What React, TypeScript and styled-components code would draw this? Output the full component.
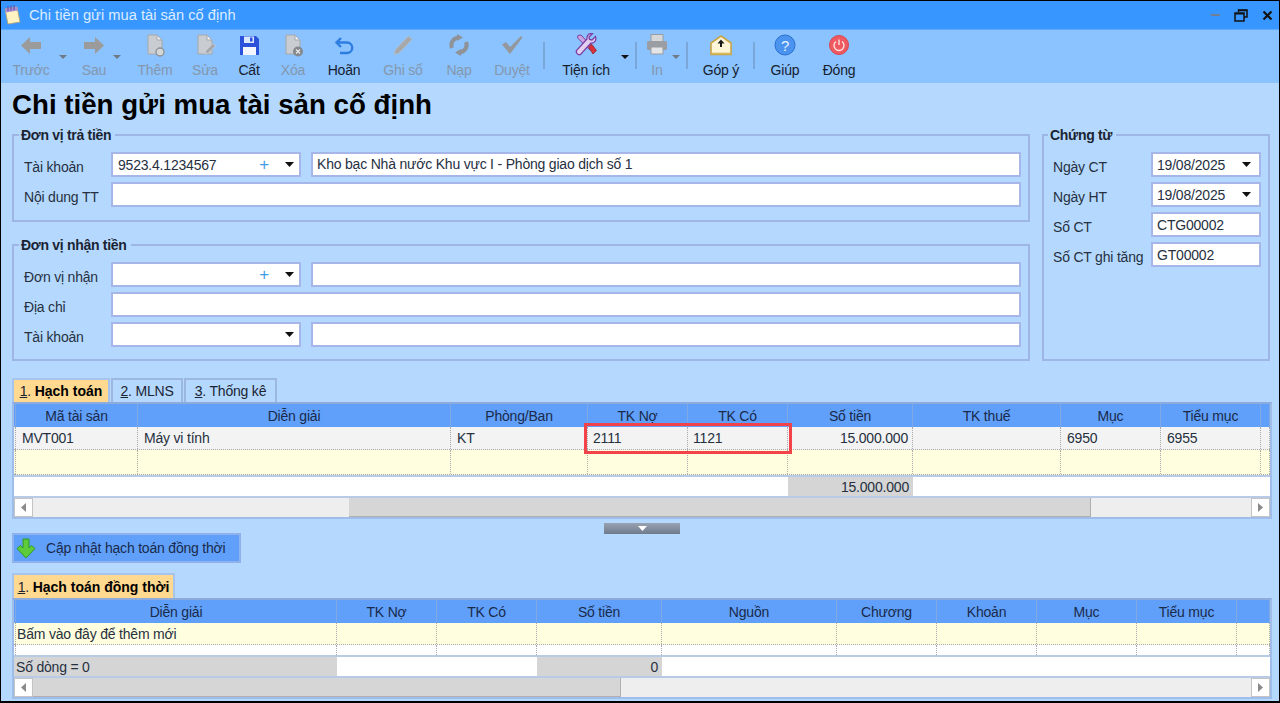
import React from "react";
import styled, { createGlobalStyle } from "styled-components";

const UI_FONT = `"Liberation Sans", Arial, sans-serif`;

const GlobalStyle = createGlobalStyle`
  html, body {
    margin: 0;
    padding: 0;
    overflow: hidden;
    background: #b5d9fe;
  }
  * {
    box-sizing: border-box;
  }
`;

const ICONS: Record<string, React.ReactNode> = {
  back: <path d="M2 12.500 11 4v5h11v7H11v5z" fill="#9b9b9b" />,
  next: <path d="M22 12.500 13 4v5H2v7h11v5z" fill="#9b9b9b" />,
  add: (
    <>
      <path d="M5 2h9l5 5v14H5z" fill="#c9cdd2" stroke="#a4a8ac" />
      <path d="M14 2v5h5z" fill="#eef0f2" stroke="#a4a8ac" />
      <circle cx="17" cy="19" r="4" fill="#d3d7da" stroke="#8f9296" strokeWidth="1.4" />
    </>
  ),
  edit: (
    <>
      <path d="M5 2h9l5 5v14H5z" fill="#c9cdd2" stroke="#a4a8ac" />
      <path d="M14 2v5h5z" fill="#eef0f2" stroke="#a4a8ac" />
      <path d="m12 21 1-3.500 7-7 2.500 2.500-7 7z" fill="#a3a6aa" stroke="#d6d9dc" strokeWidth=".6" />
    </>
  ),
  save: (
    <>
      <path d="M3 3h16l3 3v16H3z" fill="#2b52d9" />
      <rect x="7" y="3.500" width="10" height="6.500" fill="#dbe6ff" />
      <rect x="13" y="4.500" width="2.500" height="4" fill="#2b52d9" />
      <rect x="6" y="14" width="13" height="8" fill="#f4f6ff" />
    </>
  ),
  remove: (
    <>
      <path d="M5 2h9l5 5v14H5z" fill="#c9cdd2" stroke="#a4a8ac" />
      <path d="M14 2v5h5z" fill="#eef0f2" stroke="#a4a8ac" />
      <circle cx="17" cy="18.500" r="5" fill="#84888c" />
      <path d="m15 16.500 4 4m0-4-4 4" stroke="#e8e8e8" strokeWidth="1.300" />
    </>
  ),
  undo: (
    <path
      d="M9 5 4.500 9.500 9 14M4.500 9.500H15a5 5 0 0 1 0 10.500H8"
      fill="none"
      stroke="#2e7de0"
      strokeWidth="2.400"
    />
  ),
  post: <path d="m17.500 3 3.500 3.500L8 20l-5 1.500L4.500 16.500z" fill="#a6a8aa" stroke="#c0c2c4" strokeWidth=".6" />,
  reload: (
    <>
      <path d="M5 15c-2-5 1-10 7-10.500M19 9c2 5-1 10-7 10.500" fill="none" stroke="#8f9296" strokeWidth="4" />
      <path d="m10 1 6 3.500-6 3.500zm4 15-6 3.500 6 3.500z" fill="#8f9296" />
    </>
  ),
  check: <path d="M2 11.500 6 9l4 5L21 3l1.500 1.500L10 21z" fill="#94989c" />,
  tools: (
    <>
      <path d="M4 2.500 7 2l12 13-2.500 2.500L3.500 5z" fill="#c9a4e0" stroke="#7b3fa6" strokeWidth="1" />
      <path d="m14.500 14 3-3 5 6.500-3.500 3.500z" fill="#d8323c" stroke="#92242c" strokeWidth=".8" />
      <path
        d="M21.500 3.500 18 7l-2.500-.5-.5-2.500 3.500-3.500c-3-.7-6 1.500-5.500 5.500L2.500 17.500c-1 2 1.500 5 4 4L17 10c4 .5 5.500-3 4.500-6.500z"
        fill="#e3d0f0"
        stroke="#7b3fa6"
        strokeWidth="1.300"
      />
    </>
  ),
  print: (
    <>
      <rect x="6" y="1.500" width="12" height="7" fill="#d5d7d9" stroke="#9a9da1" />
      <rect x="2" y="8" width="20" height="9" rx="1.500" fill="#9a9da1" />
      <rect x="6" y="14" width="12" height="7" fill="#e2e4e6" stroke="#9a9da1" />
    </>
  ),
  idea: (
    <>
      <path d="M2 10 12 3l10 7v11.500H2z" fill="#fff6d8" stroke="#c9a548" strokeWidth="1.600" />
      <path d="M12 6.500 8.500 10.500H11V14h2v-3.500h2.500z" fill="#1b1b1b" />
      <path d="M3 20.500h18" stroke="#d9b85a" strokeWidth="1.600" />
    </>
  ),
  help: (
    <>
      <circle cx="12" cy="12" r="10" fill="#4a94f0" stroke="#2a6fce" />
      <text x="12" y="17.500" fontFamily={UI_FONT} fontSize="15" fill="#e8f2ff" textAnchor="middle">
        ?
      </text>
    </>
  ),
  close: (
    <>
      <circle cx="12" cy="12" r="9.500" fill="#ef5a60" stroke="#d8474d" />
      <path d="M9 8.500a5 5 0 1 0 6 0M12 6.500v5.500" fill="none" stroke="#ffe3e3" strokeWidth="1.400" />
    </>
  ),
};

type ToolEntry =
  | { kind: "item"; icon: string; label: string; w: number; ml?: number; on?: boolean }
  | { kind: "caret"; ml?: number; on?: boolean }
  | { kind: "sep"; ml: number };

const TOOLS: ToolEntry[] = [
  { kind: "item", icon: "back", label: "Trước", w: 48 },
  { kind: "caret", ml: 4 },
  { kind: "item", icon: "next", label: "Sau", w: 38, ml: 8 },
  { kind: "caret" },
  { kind: "item", icon: "add", label: "Thêm", w: 44, ml: 12 },
  { kind: "item", icon: "edit", label: "Sửa", w: 44, ml: 6 },
  { kind: "item", icon: "save", label: "Cất", w: 44, on: true },
  { kind: "item", icon: "remove", label: "Xóa", w: 44 },
  { kind: "item", icon: "undo", label: "Hoãn", w: 50, ml: 4, on: true },
  { kind: "item", icon: "post", label: "Ghi sổ", w: 52, ml: 8 },
  { kind: "item", icon: "reload", label: "Nạp", w: 44, ml: 8 },
  { kind: "item", icon: "check", label: "Duyệt", w: 50, ml: 6 },
  { kind: "sep", ml: 6 },
  { kind: "item", icon: "tools", label: "Tiện ích", w: 70, ml: 6, on: true },
  { kind: "caret", on: true },
  { kind: "sep", ml: 6 },
  { kind: "item", icon: "print", label: "In", w: 30, ml: 5 },
  { kind: "caret" },
  { kind: "sep", ml: 6 },
  { kind: "item", icon: "idea", label: "Góp ý", w: 50, ml: 8, on: true },
  { kind: "sep", ml: 7 },
  { kind: "item", icon: "help", label: "Giúp", w: 44, ml: 8, on: true },
  { kind: "item", icon: "close", label: "Đóng", w: 50, ml: 7, on: true },
];

const MAIN_COLS = "2px 122px 313px 137px 100px 100px 125px 148px 100px 100px 1fr";
const SUB_COLS = "2px 321px 100px 100px 125px 175px 100px 100px 100px 100px 1fr";

const MAIN_HEAD = ["Mã tài sản", "Diễn giải", "Phòng/Ban", "TK Nợ", "TK Có", "Số tiền", "TK thuế", "Mục", "Tiểu mục"];
const SUB_HEAD = ["Diễn giải", "TK Nợ", "TK Có", "Số tiền", "Nguồn", "Chương", "Khoản", "Mục", "Tiểu mục"];
const MAIN_ROW = ["MVT001", "Máy vi tính", "KT", "2111", "1121", "15.000.000", "", "6950", "6955"];

const Blanks = ({ count }: { count: number }) => (
  <>
    {Array.from({ length: count }).map((_, i) => (
      <Cell key={i} />
    ))}
  </>
);

const GridHead = ({ cols, names }: { cols: string; names: string[] }) => (
  <HeadRow $cols={cols}>
    <HeadCell />
    {names.map((name) => (
      <HeadCell key={name}>{name}</HeadCell>
    ))}
    <HeadCell />
  </HeadRow>
);

const Scrollbar = ({ thumbLeft, thumbWidth, h }: { thumbLeft: number; thumbWidth: number; h: number }) => (
  <ScrollWrap $h={h}>
    <ScrollButton>
      <svg width="7" height="9" viewBox="0 0 7 9">
        <path d="M6 0v9L1 4.500z" fill="#8a8a8a" />
      </svg>
    </ScrollButton>
    <ScrollTrack>
      <ScrollThumb $left={thumbLeft} $width={thumbWidth} />
    </ScrollTrack>
    <ScrollButton>
      <svg width="7" height="9" viewBox="0 0 7 9">
        <path d="M1 0v9l5-4.500z" fill="#8a8a8a" />
      </svg>
    </ScrollButton>
  </ScrollWrap>
);

const Combo = ({ value, plus }: { value?: string; plus?: boolean }) => (
  <ComboBox>
    <ComboText>{value}</ComboText>
    {plus && <PlusMark>+</PlusMark>}
    <DropCaret />
  </ComboBox>
);

export default function App() {
  return (
    <Window>
      <GlobalStyle />
      <TitleBar>
        <svg width="18" height="22" viewBox="0 0 18 22">
          <path d="M1 5 13 3l3 15-12 2z" fill="#fff3c4" stroke="#b9a26a" strokeWidth=".8" />
          <path d="M1 5 13 3l.8 3.500-12 2z" fill="#a58fd6" />
          <path d="M4 2v5M7 1.500v5M10 1v5" stroke="#6d52a8" strokeWidth="1.200" />
        </svg>
        <TitleText>Chi tiền gửi mua tài sản cố định</TitleText>
        <WindowControls>
          <MinimizeBar />
          <svg width="14" height="13" viewBox="0 0 14 13">
            <path d="M4.500 3V1h8.500v7h-3" fill="none" stroke="#111" strokeWidth="1.500" />
            <rect x="1" y="4" width="9" height="8" fill="none" stroke="#111" strokeWidth="1.500" />
            <path d="M4.500 1.500H13M1 4.700h9" stroke="#111" strokeWidth="1.500" />
          </svg>
          <svg width="11" height="11" viewBox="0 0 11 11">
            <path d="m1.500 1.500 8 8m0-8-8 8" stroke="#111" strokeWidth="2.200" />
          </svg>
        </WindowControls>
      </TitleBar>

      <Toolbar>
        {TOOLS.map((tool, i) => {
          if (tool.kind === "sep") return <ToolSep key={i} $ml={tool.ml} />;
          if (tool.kind === "caret") return <ToolCaret key={i} $ml={tool.ml ?? 0} $on={!!tool.on} />;
          return (
            <ToolItem key={i} $w={tool.w} $ml={tool.ml ?? 0} $on={!!tool.on}>
              <svg width="24" height="24" viewBox="0 0 24 24">
                {ICONS[tool.icon]}
              </svg>
              <span>{tool.label}</span>
            </ToolItem>
          );
        })}
      </Toolbar>

      <Body>
        <Heading>Chi tiền gửi mua tài sản cố định</Heading>

        <TopSection>
          <LeftColumn>
            <Group $pb={13}>
              <legend>Đơn vị trả tiền</legend>
              <FormRow>
                <FieldLabel $w={87}>Tài khoản</FieldLabel>
                <Combo value="9523.4.1234567" plus />
                <TextBox $grow>Kho bạc Nhà nước Khu vực I - Phòng giao dịch số 1</TextBox>
              </FormRow>
              <FormRow>
                <FieldLabel $w={87}>Nội dung TT</FieldLabel>
                <TextBox $grow />
              </FormRow>
            </Group>
            <Group $pb={12}>
              <legend>Đơn vị nhận tiền</legend>
              <FormRow>
                <FieldLabel $w={87}>Đơn vị nhận</FieldLabel>
                <Combo plus />
                <TextBox $grow />
              </FormRow>
              <FormRow>
                <FieldLabel $w={87}>Địa chỉ</FieldLabel>
                <TextBox $grow />
              </FormRow>
              <FormRow>
                <FieldLabel $w={87}>Tài khoản</FieldLabel>
                <Combo />
                <TextBox $grow />
              </FormRow>
            </Group>
          </LeftColumn>

          <VoucherGroup $pb={12}>
            <legend>Chứng từ</legend>
            <FormRow>
              <FieldLabel $w={98}>Ngày CT</FieldLabel>
              <DateBox>
                19/08/2025
                <DropCaret />
              </DateBox>
            </FormRow>
            <FormRow>
              <FieldLabel $w={98}>Ngày HT</FieldLabel>
              <DateBox>
                19/08/2025
                <DropCaret />
              </DateBox>
            </FormRow>
            <FormRow>
              <FieldLabel $w={98}>Số CT</FieldLabel>
              <DateBox>CTG00002</DateBox>
            </FormRow>
            <FormRow>
              <FieldLabel $w={98}>Số CT ghi tăng</FieldLabel>
              <DateBox>GT00002</DateBox>
            </FormRow>
          </VoucherGroup>
        </TopSection>

        <TabStrip $top={17} $h={24}>
          <Tab $active $w={98}>
            <u>1</u>. <b>Hạch toán</b>
          </Tab>
          <Tab $w={72}>
            <u>2</u>. MLNS
          </Tab>
          <Tab $w={93}>
            <u>3</u>. Thống kê
          </Tab>
        </TabStrip>

        <GridFrame>
          <GridHead cols={MAIN_COLS} names={MAIN_HEAD} />
          <DataRow $cols={MAIN_COLS} $h={23} $bg="#f3f3f3">
            <Cell />
            {MAIN_ROW.map((text, i) => (
              <Cell key={i} $right={i === 5} $pad={i === 3 || i === 4 ? 5 : 6}>
                {text}
              </Cell>
            ))}
            <Cell />
          </DataRow>
          <DataRow $cols={MAIN_COLS} $h={25} $bg="#ffffe0">
            <Blanks count={11} />
          </DataRow>
          <FooterRow $cols="774px 125px 1fr" $h={21}>
            <FooterCell />
            <FooterCell $shade $right>
              15.000.000
            </FooterCell>
            <FooterCell />
          </FooterRow>
          <Scrollbar thumbLeft={316} thumbWidth={742} h={21} />
          <Highlight />
        </GridFrame>

        <Splitter>
          <svg width="9" height="5" viewBox="0 0 9 5">
            <path d="M0 0h9L4.500 5z" fill="#fff" />
          </svg>
        </Splitter>

        <SyncButton>
          <svg width="20" height="22" viewBox="0 0 20 22">
            <path d="M10 21 1 11.500l3.500-3L7 11V2h6v9l2.500-2.500 3.500 3z" fill="#5ecb3c" stroke="#2f9a22" />
          </svg>
          Cập nhật hạch toán đồng thời
        </SyncButton>

        <TabStrip $top={10} $h={25}>
          <Tab $active $w={163}>
            <u>1</u>. <b>Hạch toán đồng thời</b>
          </Tab>
        </TabStrip>

        <GridFrame>
          <GridHead cols={SUB_COLS} names={SUB_HEAD} />
          <DataRow $cols={SUB_COLS} $h={22} $bg="#ffffe0">
            <Cell />
            <Cell $pad={1}>Bấm vào đây để thêm mới</Cell>
            <Blanks count={9} />
          </DataRow>
          <DataRow $cols={SUB_COLS} $h={10} $bg="#fff" $plain>
            <Blanks count={11} />
          </DataRow>
          <FooterRow $cols="323px 200px 125px 1fr" $h={21}>
            <FooterCell $shade>Số dòng = 0</FooterCell>
            <FooterCell />
            <FooterCell $shade $right>
              0
            </FooterCell>
            <FooterCell />
          </FooterRow>
          <Scrollbar thumbLeft={0} thumbWidth={588} h={21} />
        </GridFrame>
      </Body>
    </Window>
  );
}

const Window = styled.div`
  width: 1280px;
  height: 703px;
  display: flex;
  flex-direction: column;
  border: 1px solid #000;
  border-bottom-width: 2px;
  background: #b5d9fe;
  font-family: ${UI_FONT};
  font-size: 14px;
  letter-spacing: -0.2px;
  color: #26303f;
  overflow: hidden;
`;

const TitleBar = styled.header`
  height: 28px;
  flex: none;
  display: flex;
  align-items: center;
  padding: 0 6px 0 3px;
  background: #3796ff;
`;

const TitleText = styled.span`
  margin-left: 7px;
  font-size: 14.7px;
  letter-spacing: 0;
  color: #dcecff;
`;

const WindowControls = styled.div`
  margin-left: auto;
  display: flex;
  align-items: center;
  gap: 14px;
`;

const MinimizeBar = styled.span`
  width: 9px;
  height: 2px;
  background: #6f7f95;
`;

const Toolbar = styled.nav`
  height: 54px;
  flex: none;
  display: flex;
  padding: 3px 0 0 6px;
  background: #8ac3ff;
  border-top: 1px solid #5caaff;
`;

const ToolItem = styled.div<{ $w: number; $ml: number; $on: boolean }>`
  width: ${(p) => p.$w}px;
  margin-left: ${(p) => p.$ml}px;
  flex: none;
  display: flex;
  flex-direction: column;
  align-items: center;
  gap: 5px;
  line-height: 16px;
  white-space: nowrap;
  color: ${(p) => (p.$on ? "#16202e" : "#8597ad")};
`;

const ToolCaret = styled.span<{ $ml: number; $on: boolean }>`
  width: 8px;
  height: 4px;
  flex: none;
  margin: 22px 0 0 ${(p) => p.$ml}px;
  background: ${(p) => (p.$on ? "#111" : "#6f7a88")};
  clip-path: polygon(0 0, 100% 0, 50% 100%);
`;

const ToolSep = styled.span<{ $ml: number }>`
  width: 2px;
  height: 27px;
  flex: none;
  margin: 9px 0 0 ${(p) => p.$ml}px;
  background: #7aa7d8;
`;

const Body = styled.main`
  flex: 1;
  display: flex;
  flex-direction: column;
  padding: 0 7px 0 11px;
  min-height: 0;
`;

const Heading = styled.h1`
  height: 44px;
  margin: 0;
  flex: none;
  font-size: 27.7px;
  line-height: 44px;
  letter-spacing: 0;
  font-weight: 700;
  color: #000;
`;

const TopSection = styled.section`
  display: flex;
  align-items: stretch;
  gap: 12px;
  padding-right: 2px;
`;

const LeftColumn = styled.div`
  width: 1018px;
  flex: none;
  display: flex;
  flex-direction: column;
  gap: 15px;
`;

const Group = styled.fieldset<{ $pb: number }>`
  margin: 0;
  min-width: 0;
  display: flex;
  flex-direction: column;
  gap: 5px;
  padding: 9px 7px ${(p) => p.$pb}px 10px;
  border: 2px solid #9db6e6;

  legend {
    margin-left: -5px;
    padding: 0 4px 0 2px;
    font-size: 14px;
    line-height: 16px;
    font-weight: 700;
    letter-spacing: -0.3px;
    color: #1b2433;
  }
`;

const VoucherGroup = styled(Group)`
  flex: 1;
  padding: 9px 6px 12px 9px;
`;

const FormRow = styled.div`
  display: flex;
  align-items: center;
  height: 25px;
`;

const FieldLabel = styled.label<{ $w: number }>`
  width: ${(p) => p.$w}px;
  flex: none;
  padding-top: 5px;
  white-space: nowrap;
`;

const TextBox = styled.div<{ $grow?: boolean }>`
  height: 25px;
  ${(p) => p.$grow && "flex: 1;"}
  min-width: 0;
  padding: 0 4px;
  line-height: 21px;
  background: #fff;
  border: 2px solid #a6b6e8;
  white-space: nowrap;
`;

const ComboBox = styled.div`
  width: 190px;
  height: 25px;
  flex: none;
  margin-right: 10px;
  display: flex;
  align-items: center;
  padding: 0 5px;
  background: #fff;
  border: 2px solid #a6b6e8;
`;

const ComboText = styled.span`
  flex: 1;
`;

const PlusMark = styled.span`
  margin-right: 16px;
  font-size: 17px;
  line-height: 17px;
  color: #3f9be6;
`;

const DropCaret = styled.span`
  width: 9px;
  height: 5px;
  flex: none;
  background: #111;
  clip-path: polygon(0 0, 100% 0, 50% 100%);
`;

const DateBox = styled.div`
  width: 110px;
  height: 25px;
  flex: none;
  display: flex;
  align-items: center;
  justify-content: space-between;
  padding: 0 8px 0 4px;
  background: #fff;
  border: 2px solid #a6b6e8;
  white-space: nowrap;
`;

const TabStrip = styled.div<{ $top: number; $h: number }>`
  height: ${(p) => p.$h}px;
  flex: none;
  display: flex;
  gap: 1px;
  margin-top: ${(p) => p.$top}px;
`;

const Tab = styled.div<{ $active?: boolean; $w: number }>`
  width: ${(p) => p.$w}px;
  display: flex;
  align-items: center;
  justify-content: center;
  white-space: pre;
  color: #1b2433;
  background: ${(p) => (p.$active ? "#ffd98f" : "#b5d9fe")};
  border: 2px solid ${(p) => (p.$active ? "#a8c4ec" : "#9cb8e0")};
  border-bottom: 0;

  b {
    letter-spacing: 0;
    color: #000;
  }
`;

const GridFrame = styled.section`
  position: relative;
  flex: none;
  border: 2px solid #9fbde8;
  border-top-color: #8dabdd;
  background: #fff;
`;

const HeadRow = styled.div<{ $cols: string }>`
  height: 23px;
  display: grid;
  grid-template-columns: ${(p) => p.$cols};
  background: #60a0fa;
`;

const HeadCell = styled.div`
  display: flex;
  align-items: center;
  justify-content: center;
  border-right: 1px solid #7fa8e4;
  white-space: nowrap;
  color: #1a2a4a;
`;

const DataRow = styled.div<{ $cols: string; $h: number; $bg: string; $plain?: boolean }>`
  height: ${(p) => p.$h}px;
  display: grid;
  grid-template-columns: ${(p) => p.$cols};
  background: ${(p) => p.$bg};
  ${(p) => !p.$plain && "border-bottom: 1px dotted #a9a9a9;"}
`;

const Cell = styled.div<{ $right?: boolean; $pad?: number }>`
  display: flex;
  align-items: center;
  justify-content: ${(p) => (p.$right ? "flex-end" : "flex-start")};
  padding: 0 ${(p) => (p.$right ? 4 : 0)}px 0 ${(p) => (p.$right ? 0 : p.$pad ?? 0)}px;
  border-right: 1px dotted #a9a9a9;
  white-space: nowrap;
  overflow: hidden;
`;

const FooterRow = styled.div<{ $cols: string; $h: number }>`
  height: ${(p) => p.$h}px;
  display: grid;
  grid-template-columns: ${(p) => p.$cols};
  background: #fff;
  border-top: 2px solid #b8cbe6;
`;

const FooterCell = styled.div<{ $shade?: boolean; $right?: boolean }>`
  display: flex;
  align-items: center;
  justify-content: ${(p) => (p.$right ? "flex-end" : "flex-start")};
  padding: 0 4px 0 2px;
  white-space: nowrap;
  background: ${(p) => (p.$shade ? "#d5d5d5" : "#fff")};
`;

const ScrollWrap = styled.div<{ $h: number }>`
  height: ${(p) => p.$h}px;
  display: flex;
  background: #eee;
  border-top: 2px solid #b8cbe6;
`;

const ScrollButton = styled.div`
  width: 19px;
  flex: none;
  display: flex;
  align-items: center;
  justify-content: center;
  background: #fff;
  border: 1px solid #c4c4c4;
`;

const ScrollTrack = styled.div`
  flex: 1;
  min-width: 0;
`;

const ScrollThumb = styled.div<{ $left: number; $width: number }>`
  width: ${(p) => p.$width}px;
  height: 100%;
  margin-left: ${(p) => p.$left}px;
  background: #d6d6d6;
  border-right: 1px solid #b0b0b0;
  border-bottom: 1px solid #b0b0b0;
`;

const Highlight = styled.div`
  position: absolute;
  left: 570px;
  top: 19px;
  width: 208px;
  height: 31px;
  border: 3px solid #f2424a;
  pointer-events: none;
`;

const Splitter = styled.div`
  width: 76px;
  height: 11px;
  flex: none;
  margin: 4px auto -1px;
  display: flex;
  align-items: center;
  justify-content: center;
  background: linear-gradient(#98a2b2, #6f7a8c);
`;

const SyncButton = styled.button`
  width: 229px;
  height: 30px;
  flex: none;
  display: flex;
  align-items: center;
  gap: 10px;
  padding: 0 0 0 2px;
  font: inherit;
  letter-spacing: inherit;
  color: #1a2a4a;
  background: #60a0fa;
  border: 2px solid #8fb2ec;
`;
